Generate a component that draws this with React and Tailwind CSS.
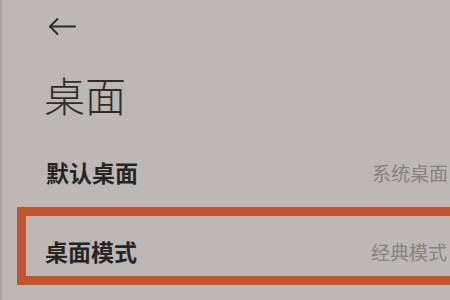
import React from 'react';

const FONT = { fontFamily: '"Noto Sans CJK SC", "Noto Sans", sans-serif' };

function BackArrow() {
  return (
    <svg width="29" height="19" viewBox="0 0 29 19" fill="none" stroke="#2b2a29" strokeWidth="2" strokeLinecap="round" strokeLinejoin="round">
      <path d="M27 9.5H2" />
      <path d="M9.5 2L2 9.5L9.5 17" />
    </svg>
  );
}

function Row({ label, value }) {
  return (
    <div className="w-[402px] flex items-center justify-between">
      <span className="text-[23px] leading-[23px] font-bold text-[#262525]">{label}</span>
      <span className="text-[19px] leading-[19px] text-[#86827f] whitespace-nowrap">{value}</span>
    </div>
  );
}

export default function App() {
  return (
    <div style={FONT} className="w-[450px] h-[300px] overflow-hidden bg-[#bdb8b4] border-l-[2px] border-[#aaa5a1] flex flex-col">
      <div className="mt-[17px] ml-[46px]">
        <BackArrow />
      </div>

      <h1 className="mt-[38px] ml-[42px] text-[41px] leading-[41px] font-light text-[#2e2d2c]">桌面</h1>

      <div className="mt-[46px] pl-[44px]">
        <Row label="默认桌面" value="系统桌面" />
      </div>

      <div className="mt-[23px] ml-[15px] w-[460px] shrink-0 h-[78px] border-[9px] border-r-0 border-[#c4532f] pl-[19px] pt-[11px] flex items-center">
        <Row label="桌面模式" value="经典模式" />
      </div>
    </div>
  );
}
